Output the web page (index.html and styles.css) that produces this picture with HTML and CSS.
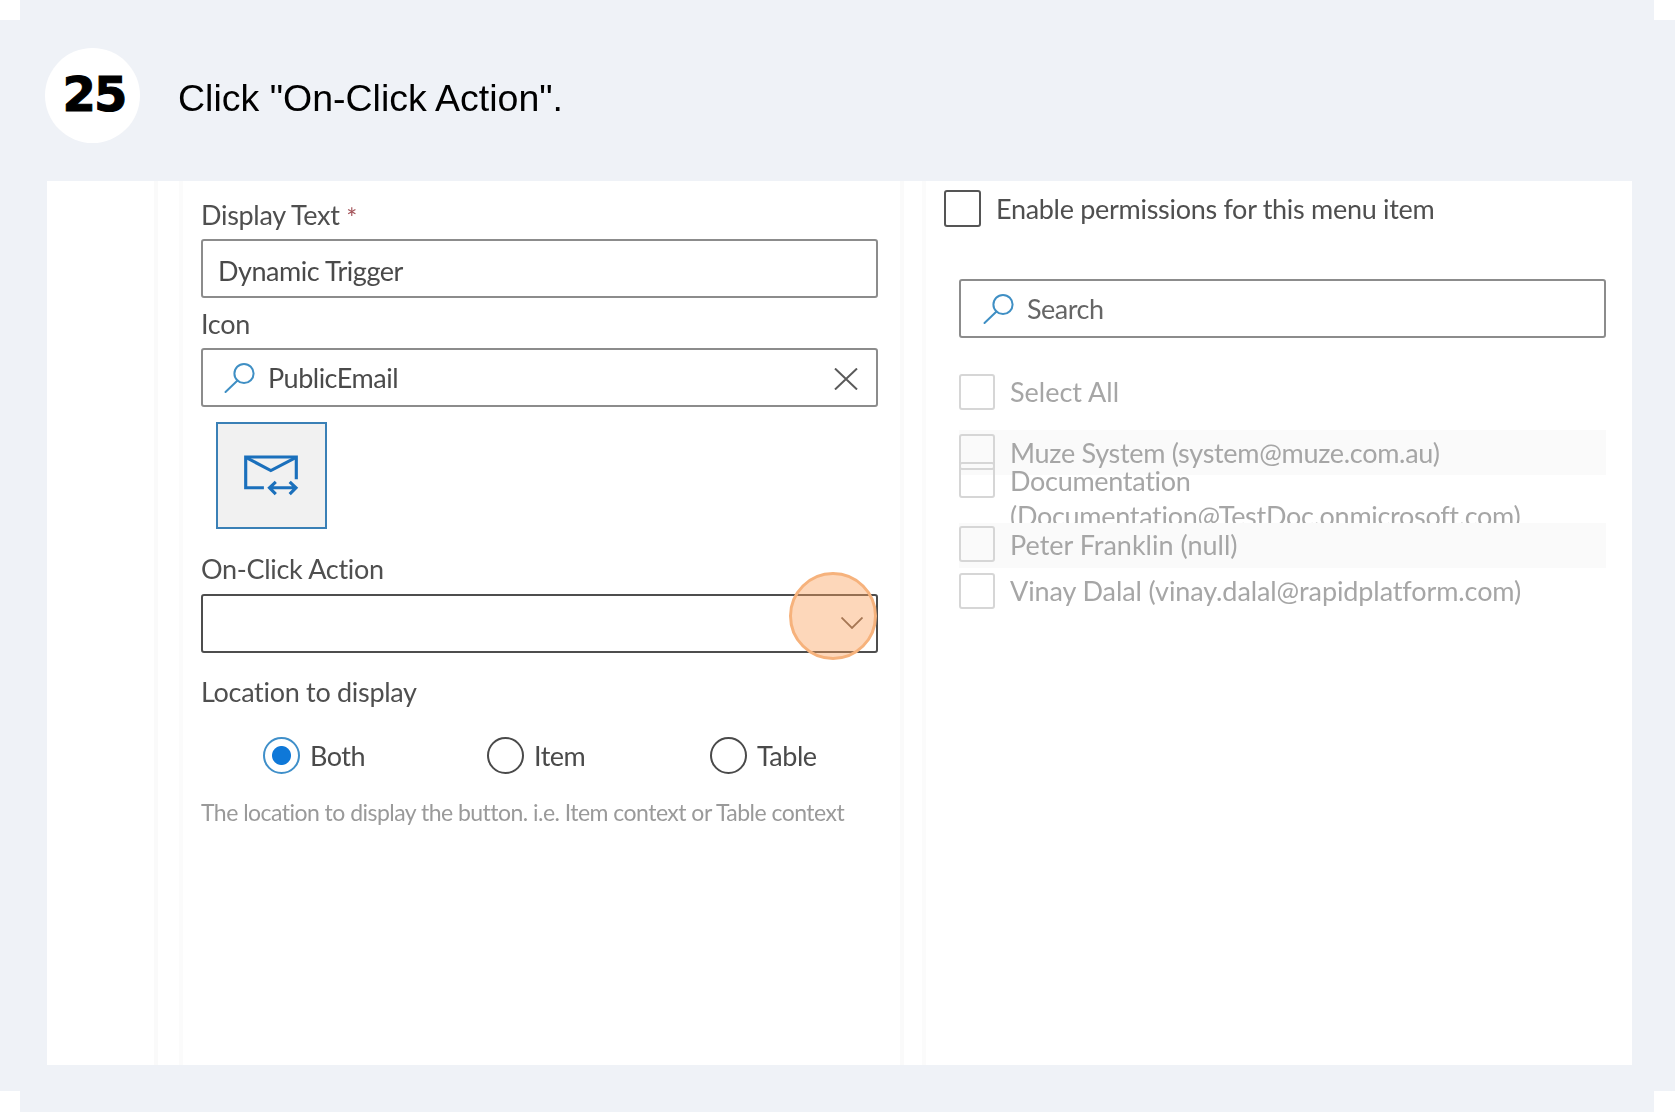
FILE: index.html
```html
<!doctype html>
<html>
   <head>
      <title>Step 25</title>
      <link rel="stylesheet" href="styles.css">
   </head>
   <body>
      <main class="sheet">
         <header class="step">
            <div class="step-num">25</div>
            <h1 class="step-title">Click "On-Click Action".</h1>
         </header>

         <section class="shot">
            <div class="rail"></div>
            <div class="gutter"></div>

            <div class="form">
               <div class="label label-display">Display Text <span class="req">*</span></div>
               <div class="field field-text">Dynamic Trigger</div>

               <div class="label label-icon">Icon</div>
               <div class="field field-search">
                  <svg class="search-icon" viewBox="0 0 32 32"><circle cx="20" cy="11.5" r="9.6"/><path d="M13.5 18.5 1.5 30"/></svg>
                  <span class="grow">PublicEmail</span>
                  <svg class="clear-icon" viewBox="0 0 24 22"><path d="M1 0.5 23 21.5M23 0.5 1 21.5"/></svg>
               </div>

               <div class="icon-preview">
                  <svg class="mail-icon" viewBox="190 465 170 130">
                     <path d="M252 567H197V474H350V541"/>
                     <path d="M199 476 273 515 348 476"/>
                     <path d="M269 567H349M288 549 269 567 288 586M330 549 349 567 330 586"/>
                  </svg>
               </div>

               <div class="label label-action">On-Click Action</div>
               <div class="field field-select">
                  <svg class="chevron" viewBox="0 0 22 12"><path d="M0.5 0.5 11 11 21.5 0.5"/></svg>
                  <div class="click-mark"></div>
               </div>

               <div class="label label-location">Location to display</div>
               <div class="radios">
                  <div class="radio-item"><span class="radio radio-on"></span>Both</div>
                  <div class="radio-item"><span class="radio"></span>Item</div>
                  <div class="radio-item"><span class="radio"></span>Table</div>
               </div>
               <div class="hint">The location to display the button. i.e. Item context or Table context</div>
            </div>

            <div class="gutter gutter-right"></div>

            <div class="perms">
               <div class="enable">
                  <span class="check check-dark"></span>
                  <span>Enable permissions for this menu item</span>
               </div>

               <div class="people">
                  <div class="field field-search field-people">
                     <svg class="search-icon" viewBox="0 0 32 32"><circle cx="20" cy="11.5" r="9.6"/><path d="M13.5 18.5 1.5 30"/></svg>
                     <span class="search-text">Search</span>
                  </div>

                  <div class="person select-all"><span class="check"></span>Select All</div>

                  <div class="list">
                     <div class="person shaded"><span class="check"></span>Muze System (system@muze.com.au)</div>
                     <div class="person person-wrap"><span class="check"></span><span class="wrap-text">Documentation (Documentation@TestDoc.onmicrosoft.com)</span></div>
                     <div class="person shaded person-short"><span class="check"></span>Peter Franklin (null)</div>
                     <div class="person person-last"><span class="check"></span>Vinay Dalal (vinay.dalal@rapidplatform.com)</div>
                  </div>
               </div>
            </div>
         </section>
      </main>
   </body>
</html>
```

FILE: styles.css
```css
* {
   margin: 0;
   padding: 0;
   box-sizing: border-box;
}

body {
   background: #ffffff;
   font-family: 'Lato', sans-serif;
   color: #4a4a4a;
   overflow: hidden;
}

/* Pale sheet with its notched corners */
.sheet {
   width: 1680px;
   height: 1116px;
   background:
      linear-gradient(#eff2f7, #eff2f7) 20px 0 / 1634px 1112px no-repeat,
      linear-gradient(#eff2f7, #eff2f7) 0 20px / 1675px 1071px no-repeat;
}

/* Step header */
.step {
   height: 181px;
   padding: 48px 0 0 45px;
   display: flex;
   align-items: flex-start;
   gap: 38px;
}

.step-num {
   width: 95px;
   height: 95px;
   padding: 0 0 3px 3px;
   border-radius: 50%;
   background: #ffffff;
   color: #000000;
   font-family: 'DejaVu Sans', sans-serif;
   font-weight: 700;
   font-size: 48px;
   letter-spacing: -2px;
   -webkit-text-stroke: 1px #000000;
   display: flex;
   justify-content: center;
   align-items: center;
}

.step-title {
   font-family: 'Liberation Sans', sans-serif;
   font-weight: 400;
   font-size: 37.5px;
   line-height: 100px;
   color: #000000;
   filter: blur(0.4px);
}

/* Screenshot area */
.shot {
   width: 1585px;
   height: 884px;
   margin-left: 47px;
   background: #ffffff;
   display: flex;
}

.rail {
   width: 107px;
}

.gutter {
   width: 29px;
   border-left: 4px solid #fafafa;
   border-right: 4px solid #fbfbfb;
}

.gutter-right {
   width: 26px;
}

.form {
   width: 717px;
   padding: 0 22px 0 18px;
   letter-spacing: -0.3px;
   filter: blur(0.4px);
}

.label {
   height: 34px;
   font-size: 27px;
   line-height: 34px;
   color: #4f4f4f;
}

.label-display { margin: 17px 0 7px; }
.label-icon { margin: 9px 0 7px; }
.label-action { margin: 23px 0 8px; }
.label-location { margin: 22px 0 28px; }

.req {
   color: #a4545a;
   font-size: 26px;
   line-height: 0;
   vertical-align: -3px;
}

.field {
   height: 59px;
   border: 2px solid #8c8c8c;
   border-radius: 3px;
   padding: 0 15px;
   font-size: 27px;
   line-height: 56px;
   color: #4a4a4a;
   display: flex;
   align-items: center;
}

.field-text {
   padding-top: 4px;
   letter-spacing: -0.45px;
}

.field-search {
   padding: 0 18px 0 21px;
   gap: 12px;
   letter-spacing: -0.5px;
}

.grow {
   flex: 1;
}

.search-icon {
   width: 32px;
   height: 32px;
   margin-top: 1px;
   flex: none;
   fill: none;
   stroke: #3f8fc4;
   stroke-width: 2;
   stroke-linecap: round;
}

.clear-icon {
   width: 24px;
   height: 22px;
   margin-top: 3px;
   fill: none;
   stroke: #5a5a5a;
   stroke-width: 2;
}

.icon-preview {
   width: 111px;
   height: 107px;
   margin: 15px 0 0 15px;
   background: #f1f1f1;
   border: 2px solid #3a80b6;
   display: flex;
   justify-content: center;
   align-items: center;
}

.mail-icon {
   width: 57px;
   height: 43px;
   fill: none;
   stroke: #1b70bc;
   stroke-width: 9.5;
}

.field-select {
   position: relative;
   border-color: #4d4d4d;
   justify-content: flex-end;
   padding-right: 13px;
}

.chevron {
   width: 22px;
   height: 12px;
   margin-top: -1px;
   fill: none;
   stroke: #6a5a50;
   stroke-width: 1.8;
}

.click-mark {
   position: absolute;
   left: 586px;
   top: -24px;
   width: 88px;
   height: 88px;
   border-radius: 50%;
   background: rgba(250, 160, 90, 0.42);
   border: 3px solid #f6b27c;
}

.radios {
   padding-left: 62px;
   display: grid;
   grid-template-columns: 224px 223px auto;
}

.radio-item {
   display: flex;
   align-items: center;
   gap: 10px;
   height: 36px;
   font-size: 27px;
   letter-spacing: -0.5px;
   color: #4a4a4a;
}

.radio {
   width: 37px;
   height: 37px;
   border-radius: 50%;
   border: 2px solid #4a4a4a;
}

.radio-on {
   border-color: #3f8fc9;
   background: radial-gradient(circle, #0f78d8 0 9px, #ffffff 10px);
}

.hint {
   height: 34px;
   margin-top: 22px;
   font-size: 23px;
   letter-spacing: -0.53px;
   line-height: 34px;
   white-space: nowrap;
   color: #9a9a9a;
}

/* Permissions column */
.perms {
   flex: 1;
   padding: 9px 0 0 18px;
   letter-spacing: -0.3px;
   filter: blur(0.4px);
}

.enable {
   display: flex;
   align-items: center;
   gap: 15px;
   font-size: 27px;
   color: #4f4f4f;
}

.check {
   width: 36px;
   height: 36px;
   flex: none;
   border: 2px solid #d6d6d6;
   border-radius: 3px;
}

.check-dark {
   width: 37px;
   height: 37px;
   border-color: #555555;
}

.people {
   width: 647px;
   margin: 52px 0 0 15px;
}

.field-people {
   padding: 0 20px 0 22px;
   gap: 12px;
}

.search-text {
   color: #666666;
}

.person {
   height: 46px;
   padding-bottom: 1px;
   display: flex;
   align-items: center;
   gap: 15px;
   font-size: 27px;
   color: #a6a6a6;
}

.select-all {
   height: 36px;
   margin-top: 36px;
   letter-spacing: 0;
}

.list {
   margin-top: 20px;
}

.shaded {
   height: 45px;
   background: #fafafa;
}

.person-short {
   padding-bottom: 3px;
   letter-spacing: 0;
}

.person-last {
   letter-spacing: -0.1px;
}

/* Second row wraps and gets cut off by the row under it */
.person-wrap {
   height: 61px;
   margin-top: -13px;
   align-items: flex-start;
   overflow: hidden;
}

.wrap-text {
   padding-top: 1px;
   line-height: 35px;
}
```
